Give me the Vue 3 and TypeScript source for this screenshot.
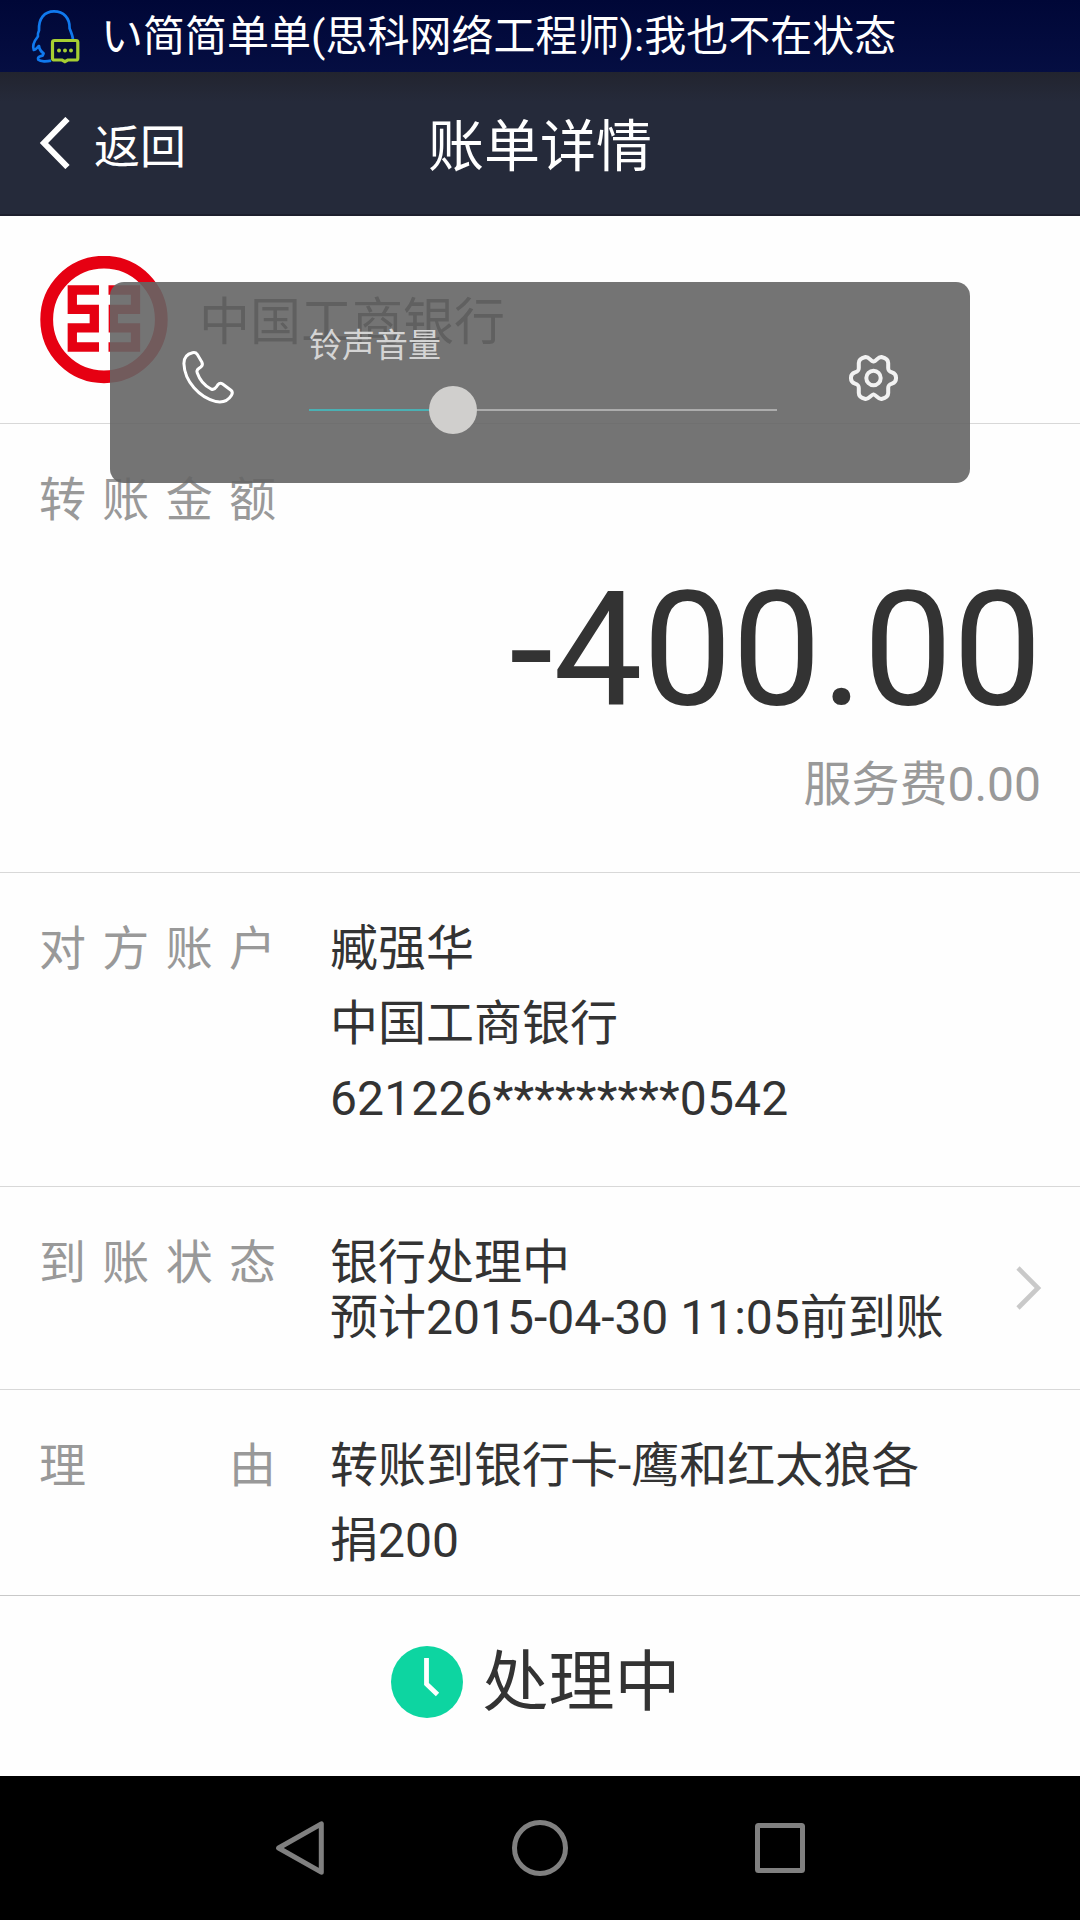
<script setup lang="ts">
interface DetailRow {
  label: string
  lines: string[]
  kind: string
  link?: boolean
}

const ticker = 'い简简单单(思科网络工程师):我也不在状态'
const rows: DetailRow[] = [
  { label: '对方账户', lines: ['臧强华', '中国工商银行', '621226*********0542'], kind: 'payee' },
  { label: '到账状态', lines: ['银行处理中', '预计2015-04-30 11:05前到账'], kind: 'arrival', link: true },
  { label: '理由', lines: ['转账到银行卡-鹰和红太狼各', '捐200'], kind: 'reason' },
]
</script>

<template>
  <div class="screen">
    <div class="status-bar">
      <svg class="qq" width="54" height="60" viewBox="28 6 54 60" fill="none">
        <path d="M51 60.6C47 61.6 40.5 61.8 38.4 59.8C37.2 57.6 39.4 56 42.6 55.6L43.6 53.4C41 51.6 39.4 49.5 39 46C37.4 47 36.2 49.5 33.8 50C32 45.5 34.2 41 37.9 36.5C37.6 34.5 38 32.5 39 30.5C38.4 18.5 44.5 11.4 54 11.4C63.5 11.4 70 18 69.6 28.5C71 32 72.6 35.5 73 39.5" stroke="#1079ee" stroke-width="2.7" stroke-linejoin="round" />
        <path d="M54.5 40.5H76Q77.8 40.5 77.8 42.3V58.2Q77.8 60 76 60H67.7L64.9 61.6L62.1 60H54.5Q52.5 60 52.5 58.2V42.3Q52.5 40.5 54.5 40.5Z" fill="#020b35" stroke="#a6cf32" stroke-width="3.2" />
        <g fill="#a6cf32"><circle cx="59" cy="50.4" r="2" /><circle cx="65" cy="50.4" r="2" /><circle cx="71" cy="50.4" r="2" /></g>
      </svg>
      <span class="ticker">{{ ticker }}</span>
    </div>

    <header class="header">
      <div class="back">
        <svg width="32" height="52" viewBox="0 0 32 52" fill="none"><path d="M28.5 2L5 26L28.5 50" stroke="#fff" stroke-width="6" /></svg>
        <span>返回</span>
      </div>
      <h1>账单详情</h1>
    </header>

    <main>
      <section class="bank">
        <svg width="128" height="128" viewBox="40 256 128 128" fill="none" stroke="#e60012">
          <circle cx="104" cy="319.5" r="57.3" stroke-width="12.8" />
          <path d="M99 290H72.3V309.4H94.3V327.8H72.3V347H99M108.5 290H135.5V309.4H113.3V327.8H135.5V347H108.5" stroke-width="9.3" />
        </svg>
        <span>中国工商银行</span>
      </section>

      <section class="amount">
        <div class="label"><span v-for="c in '转账金额'" :key="c">{{ c }}</span></div>
        <div class="sum">-400.00</div>
        <div class="fee">服务费0.00</div>
      </section>

      <section v-for="row in rows" :key="row.label" class="row" :class="row.kind">
        <div class="label"><span v-for="c in row.label" :key="c">{{ c }}</span></div>
        <div class="value"><div v-for="line in row.lines" :key="line">{{ line }}</div></div>
        <svg v-if="row.link" class="chevron" width="26" height="44" viewBox="0 0 26 44" fill="none"><path d="M2 2L22 22L2 42" stroke="#c9c9c9" stroke-width="4.6" /></svg>
      </section>

      <section class="state">
        <svg width="72" height="72" viewBox="0 0 72 72" fill="none">
          <circle cx="36" cy="36" r="36" fill="#0dd5a1" />
          <path d="M35.5 12V38L46.5 48.5" stroke="#fff" stroke-width="4.8" />
        </svg>
        <span>处理中</span>
      </section>
    </main>

    <nav class="nav">
      <svg width="600" height="80" viewBox="240 1808 600 80" fill="none" stroke="#808080" stroke-width="5" stroke-linejoin="round">
        <path d="M278.6 1848L321.3 1823.8V1872.2Z" />
        <circle cx="540" cy="1848" r="25.5" />
        <rect x="757.5" y="1825.5" width="45" height="45" rx="1" />
      </svg>
    </nav>

    <div class="volume">
      <svg class="phone" width="56" height="58" viewBox="180 349 56 58" fill="none" stroke="#fff" stroke-width="3" stroke-linejoin="round">
        <path d="M192.5 352.7C194.6 352.2 196 352.5 197.2 354.3L201.8 362C203 364.3 202.6 365.6 200.8 367C197.6 369.2 196.3 370.2 197.2 372.8C199.5 379.5 205 386 211 389C213.5 390 215 389.2 216.5 386.8C218 383.8 220 382.4 222.6 384L231 390.2C232.8 391.8 232.7 393.3 231.5 395.3C228 401 222.5 402.8 216 401.6C199.5 397.5 184.5 381.5 183.9 363.5C183.9 358 186.5 354 192.5 352.7Z" />
      </svg>
      <div class="slider">
        <span class="name">铃声音量</span>
        <div class="track"><div class="filled"></div><div class="thumb"></div></div>
      </div>
      <svg class="gear" width="52" height="50" viewBox="847 353 52 50" fill="none" stroke="#f2f2f2" stroke-width="4" stroke-linejoin="round">
        <path d="M873.5 365.6C870.5 365 869 360.5 865.5 361C861 362 858.8 364 858.8 367V372C858.8 374.5 858 375.4 855 376.4C852 377.4 851 378.8 851 381.5V382.5C851 385.2 852 386.6 855 387.6C858 388.6 858.8 389.5 858.8 392V397C858.8 400 861 402 865.5 403C869 403.5 870.5 399 873.5 398.4C876.5 399 878 403.5 881.5 403C886 402 888.2 400 888.2 397V392C888.2 389.5 889 388.6 892 387.6C895 386.6 896 385.2 896 382.5V381.5C896 378.8 895 377.4 892 376.4C889 375.4 888.2 374.5 888.2 372V367C888.2 364 886 362 881.5 361C878 360.5 876.5 365 873.5 365.6Z" transform="translate(0 -4)" />
        <circle cx="873.5" cy="378" r="7.2" />
      </svg>
    </div>
  </div>
</template>

<style>
body {
  margin: 0;
  overflow: hidden;
}
</style>

<style scoped>
.screen {
  position: relative;
  display: flex;
  flex-direction: column;
  width: 1080px;
  height: 1920px;
  overflow: hidden;
  background: #fefefe;
  color: #333;
  font-family: Roboto, 'Noto Sans CJK SC', sans-serif;
  font-size: 48px;
}
svg {
  display: block;
  flex: none;
}
.status-bar {
  display: flex;
  align-items: center;
  box-sizing: border-box;
  height: 72px;
  padding-left: 28px;
  background: linear-gradient(#000737, #050e42);
  color: #fff;
}
.ticker {
  margin-left: 19px;
  padding-top: 2px;
  font-size: 42px;
  line-height: 60px;
  white-space: nowrap;
}
.header {
  display: grid;
  grid-template-columns: 1fr auto 1fr;
  align-items: center;
  box-sizing: border-box;
  height: 144px;
  padding-left: 39px;
  padding-right: 39px;
  border-bottom: 2px solid #1d1f2d;
  background: linear-gradient(#22242f, #252a3a 30px);
  color: #fff;
}
.back {
  display: flex;
  align-items: center;
  gap: 23px;
  font-size: 46px;
}
h1 {
  margin: 0;
  padding-bottom: 4px;
  font-size: 56px;
  font-weight: 400;
}
main {
  display: flex;
  flex-direction: column;
  height: 1560px;
}
section {
  box-sizing: border-box;
  border-bottom: 1px solid #d8d8d8;
}
.bank {
  display: flex;
  align-items: center;
  gap: 31px;
  height: 208px;
  padding-left: 40px;
  font-size: 51px;
}
.bank span {
  padding-bottom: 4px;
}
.label {
  display: flex;
  justify-content: space-between;
  width: 237px;
  flex: none;
  line-height: 75px;
  font-size: 47px;
  color: #999;
}
.amount {
  height: 449px;
  padding: 38px 39px 0 39px;
}
.sum {
  margin-top: 20px;
  margin-right: -1px;
  font-size: 159px;
  line-height: 186px;
  text-align: right;
}
.fee {
  margin-top: 4px;
  line-height: 75px;
  color: #999;
  text-align: right;
}
.row {
  display: flex;
  padding: 38px 38px 0 39px;
}
.value {
  flex: 1;
  margin-left: 54px;
  line-height: 75px;
  white-space: nowrap;
}
.payee {
  height: 314px;
}
.payee .value div:last-child {
  letter-spacing: 0.13px;
}
.arrival {
  height: 203px;
}
.arrival .value {
  padding-top: 10px;
  line-height: 55px;
}
.chevron {
  margin-top: 41px;
}
.reason {
  height: 206px;
  border-color: #c8c8c8;
}
.state {
  display: flex;
  flex: 1;
  align-items: center;
  justify-content: center;
  gap: 20px;
  padding-right: 9px;
  padding-bottom: 8px;
  border: 0;
  font-size: 66px;
}
.state span {
  line-height: 90px;
  padding-top: 2px;
}
.nav {
  display: flex;
  align-items: center;
  justify-content: center;
  height: 144px;
  background: #000;
}
.volume {
  position: absolute;
  left: 110px;
  top: 282px;
  display: flex;
  align-items: flex-start;
  box-sizing: border-box;
  width: 860px;
  height: 201px;
  padding-left: 70px;
  border-radius: 14px;
  background: rgba(101, 101, 101, 0.9);
}
.phone {
  margin-top: 67px;
}
.slider {
  display: flex;
  flex-direction: column;
  width: 468px;
  margin: 40px 70px 0 73px;
}
.name {
  color: #d4d4d4;
  font-size: 33px;
  line-height: 48px;
}
.track {
  display: flex;
  align-items: center;
  height: 48px;
  margin-top: 16px;
  background: linear-gradient(#acacac, #acacac) center / 100% 2px no-repeat;
}
.filled {
  width: 120px;
  height: 2px;
  background: #4ab0b3;
}
.thumb {
  width: 48px;
  height: 48px;
  border-radius: 50%;
  background: #d0cfcd;
}
.gear {
  margin-top: 71px;
}
</style>
